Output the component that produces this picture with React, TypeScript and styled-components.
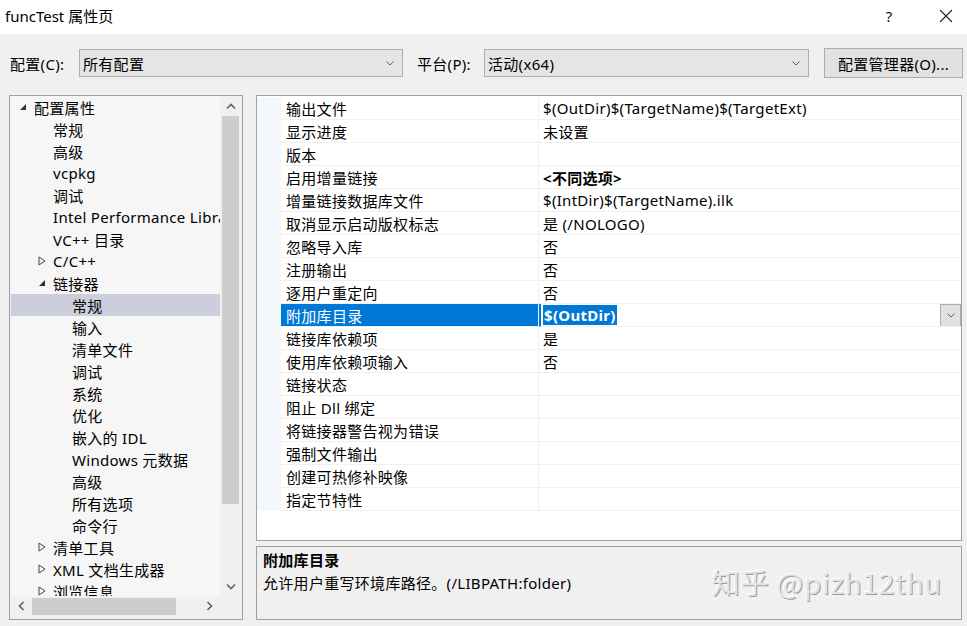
import React from "react";
import styled, { createGlobalStyle } from "styled-components";

const Global = createGlobalStyle`
  html, body { margin: 0; padding: 0; background: #f0f0f0; }
  body { font-family: "Noto Sans", "Noto Sans CJK SC", sans-serif; font-size: 15px; letter-spacing: 0.3px; color: #000; }
  * { box-sizing: border-box; }
`;

const Window = styled.div`
  width: 967px;
  height: 626px;
  display: flex;
  flex-direction: column;
  overflow: hidden;
  background: #f0f0f0;
`;

const TitleBar = styled.div`
  height: 34px;
  flex-shrink: 0;
  background: #fff;
  display: flex;
  align-items: center;
  padding: 0 1px 3px 5px;
  font-size: 15px;
  letter-spacing: 0;
`;

const Title = styled.div`
  flex: 1;
`;

const TitleButton = styled.div<{ $ml?: number }>`
  width: 40px;
  margin-left: ${(p) => p.$ml ?? 0}px;
  display: flex;
  justify-content: center;
  align-items: center;
  font-size: 15px;
  color: #111;
`;

const Body = styled.div`
  flex: 1;
  min-height: 0;
  display: flex;
  flex-direction: column;
  padding: 15px 5px 6px 9px;
`;

const Toolbar = styled.div`
  display: flex;
  align-items: center;
  height: 28px;
  flex-shrink: 0;
`;

const Label = styled.div<{ $w: number; $ml?: number }>`
  width: ${(p) => p.$w}px;
  margin-left: ${(p) => p.$ml ?? 0}px;
  flex-shrink: 0;
  padding-left: 1px;
`;

const Select = styled.div<{ $w: number }>`
  width: ${(p) => p.$w}px;
  height: 28px;
  flex-shrink: 0;
  background: #e5e5e5;
  border: 1px solid #adadad;
  display: flex;
  align-items: center;
  padding: 0 8px 0 3px;
`;

const SelectText = styled.div`
  flex: 1;
`;

const Button = styled.div`
  margin-left: 15px;
  width: 139px;
  height: 30px;
  flex-shrink: 0;
  background: #e1e1e1;
  border: 1px solid #adadad;
  display: flex;
  align-items: center;
  justify-content: center;
`;

const Main = styled.div`
  flex: 1;
  min-height: 0;
  display: flex;
  margin-top: 18px;
  gap: 13px;
`;

const TreePanel = styled.div`
  width: 234px;
  flex-shrink: 0;
  border: 1px solid #a0a0a0;
  display: grid;
  grid-template-columns: minmax(0, 1fr) 21px;
  grid-template-rows: minmax(0, 1fr) 21px;
  background: #f0f0f0;
  padding: 0 1px 2px 1px;
`;

const TreeContent = styled.div`
  background: #f6f6f6;
  overflow: hidden;
  display: flex;
  flex-direction: column;
  min-height: 0;
`;

const TreeRow = styled.div<{ $level: number; $sel?: boolean }>`
  height: 22px;
  flex-shrink: 0;
  display: flex;
  align-items: center;
  white-space: nowrap;
  padding-left: ${(p) => 8 + p.$level * 19}px;
  background: ${(p) => (p.$sel ? "#cccedb" : "transparent")};
`;

const Toggle = styled.div`
  width: 15px;
  flex-shrink: 0;
  display: flex;
  align-items: center;
  justify-content: flex-start;
`;

const VScroll = styled.div`
  display: flex;
  flex-direction: column;
  background: #f0f0f0;
  min-height: 0;
`;

const ArrowBox = styled.div`
  width: 21px;
  height: 20px;
  display: flex;
  align-items: center;
  justify-content: center;
  flex-shrink: 0;
`;

const VTrack = styled.div`
  flex: 1;
  display: flex;
  flex-direction: column;
  padding: 0 2px;
`;

const VThumb = styled.div`
  height: 388px;
  background: #cdcdcd;
`;

const HScroll = styled.div`
  display: flex;
  background: #f0f0f0;
  align-items: stretch;
`;

const HTrack = styled.div`
  flex: 1;
  display: flex;
  padding: 2px 0;
`;

const HThumb = styled.div`
  width: 144px;
  background: #cdcdcd;
`;

const Corner = styled.div`
  background: #f0f0f0;
`;

const RightCol = styled.div`
  flex: 1;
  display: flex;
  flex-direction: column;
  gap: 5px;
`;

const Grid = styled.div`
  height: 446px;
  flex-shrink: 0;
  border: 1px solid #a0a0a0;
  background: #fff;
  padding-top: 1px;
  display: flex;
  flex-direction: column;
`;

const GridRow = styled.div`
  height: 23px;
  display: grid;
  grid-template-columns: 24px 258px minmax(0, 1fr);
  flex-shrink: 0;
`;

const Gutter = styled.div`
  background: #f4f7fc;
`;

const NameCell = styled.div<{ $sel?: boolean }>`
  display: flex;
  align-items: center;
  padding-left: 5px;
  border-bottom: 1px solid #f0f0f0;
  border-right: 1px solid #f0f0f0;
  background: ${(p) => (p.$sel ? "#0078d7" : "#fff")};
  color: ${(p) => (p.$sel ? "#fff" : "#000")};
  white-space: nowrap;
`;

const ValueCell = styled.div<{ $sel?: boolean; $bold?: boolean }>`
  display: flex;
  align-items: center;
  padding-left: ${(p) => (p.$sel ? 2 : 4)}px;
  border-bottom: 1px solid #f0f0f0;
  border-left: ${(p) => (p.$sel ? "2px solid #0078d7" : "none")};
  font-weight: ${(p) => (p.$bold ? 700 : 400)};
  white-space: nowrap;
  overflow: hidden;
`;

const Highlight = styled.span`
  background: #0078d7;
  color: #fff;
  font-weight: 700;
  padding: 0 1px;
  line-height: 20px;
`;

const Spacer = styled.div`
  flex: 1;
`;

const DropButton = styled.div`
  width: 21px;
  height: 23px;
  background: #e1e1e1;
  border: 1px solid #adadad;
  display: flex;
  align-items: center;
  justify-content: center;
`;

const Desc = styled.div`
  flex: 1;
  border: 1px solid #a0a0a0;
  background: #f0f0f0;
  padding: 2px 6px;
  position: relative;
`;

const DescTitle = styled.div`
  font-weight: 700;
  line-height: 22px;
`;

const DescText = styled.div`
  line-height: 24px;
`;

const Watermark = styled.div`
  position: absolute;
  right: 19px;
  top: 15px;
  font-family: "Noto Sans CJK SC", "Noto Sans", sans-serif;
  font-size: 28px;
  letter-spacing: 0.8px;
  color: #e4e4e4;
  text-shadow: 1px 1px 0 #9c9c9c, -1px -1px 0 #ffffff;
`;

const Chevron = ({ size = 8, color = "#606060" }: { size?: number; color?: string }) => (
  <svg width={size} height={size / 2 + 1} viewBox="0 0 8 5">
    <path d="M0.5 0.5 L4 4 L7.5 0.5" fill="none" stroke={color} strokeWidth="1" />
  </svg>
);

const ExpandedTri = () => (
  <svg width="8" height="8" viewBox="0 0 8 8">
    <path d="M7 1 L7 7 L1 7 Z" fill="#333" />
  </svg>
);

const CollapsedTri = () => (
  <svg width="8" height="10" viewBox="0 0 8 10">
    <path d="M1 1 L7 5 L1 9 Z" fill="none" stroke="#444" strokeWidth="1" />
  </svg>
);

const ScrollArrow = ({ dir }: { dir: "up" | "down" | "left" | "right" }) => {
  const d = {
    up: "M1 5.5 L5 1.5 L9 5.5",
    down: "M1 1.5 L5 5.5 L9 1.5",
    left: "M5.5 1 L1.5 5 L5.5 9",
    right: "M1.5 1 L5.5 5 L1.5 9",
  }[dir];
  const vert = dir === "up" || dir === "down";
  return (
    <svg width={vert ? 10 : 7} height={vert ? 7 : 10} viewBox={vert ? "0 0 10 7" : "0 0 7 10"}>
      <path d={d} fill="none" stroke="#606060" strokeWidth="1.6" />
    </svg>
  );
};

type TreeItem = { text: string; level: number; toggle?: "open" | "closed"; sel?: boolean };

const treeItems: TreeItem[] = [
  { text: "配置属性", level: 0, toggle: "open" },
  { text: "常规", level: 1 },
  { text: "高级", level: 1 },
  { text: "vcpkg", level: 1 },
  { text: "调试", level: 1 },
  { text: "Intel Performance Libraries", level: 1 },
  { text: "VC++ 目录", level: 1 },
  { text: "C/C++", level: 1, toggle: "closed" },
  { text: "链接器", level: 1, toggle: "open" },
  { text: "常规", level: 2, sel: true },
  { text: "输入", level: 2 },
  { text: "清单文件", level: 2 },
  { text: "调试", level: 2 },
  { text: "系统", level: 2 },
  { text: "优化", level: 2 },
  { text: "嵌入的 IDL", level: 2 },
  { text: "Windows 元数据", level: 2 },
  { text: "高级", level: 2 },
  { text: "所有选项", level: 2 },
  { text: "命令行", level: 2 },
  { text: "清单工具", level: 1, toggle: "closed" },
  { text: "XML 文档生成器", level: 1, toggle: "closed" },
  { text: "浏览信息", level: 1, toggle: "closed" },
];

type Prop = { name: string; value: string; bold?: boolean; sel?: boolean };

const props: Prop[] = [
  { name: "输出文件", value: "$(OutDir)$(TargetName)$(TargetExt)" },
  { name: "显示进度", value: "未设置" },
  { name: "版本", value: "" },
  { name: "启用增量链接", value: "<不同选项>", bold: true },
  { name: "增量链接数据库文件", value: "$(IntDir)$(TargetName).ilk" },
  { name: "取消显示启动版权标志", value: "是 (/NOLOGO)" },
  { name: "忽略导入库", value: "否" },
  { name: "注册输出", value: "否" },
  { name: "逐用户重定向", value: "否" },
  { name: "附加库目录", value: "$(OutDir)", sel: true },
  { name: "链接库依赖项", value: "是" },
  { name: "使用库依赖项输入", value: "否" },
  { name: "链接状态", value: "" },
  { name: "阻止 Dll 绑定", value: "" },
  { name: "将链接器警告视为错误", value: "" },
  { name: "强制文件输出", value: "" },
  { name: "创建可热修补映像", value: "" },
  { name: "指定节特性", value: "" },
];

export default function App() {
  return (
    <Window>
      <Global />
      <TitleBar>
        <Title>funcTest 属性页</Title>
        <TitleButton>?</TitleButton>
        <TitleButton $ml={17}>
          <svg width="14" height="14" viewBox="0 0 14 14">
            <path d="M1 1 L13 13 M13 1 L1 13" stroke="#222" strokeWidth="1.1" />
          </svg>
        </TitleButton>
      </TitleBar>
      <Body>
        <Toolbar>
          <Label $w={70}>配置(C):</Label>
          <Select $w={324}>
            <SelectText>所有配置</SelectText>
            <Chevron />
          </Select>
          <Label $w={68} $ml={13}>平台(P):</Label>
          <Select $w={325}>
            <SelectText>活动(x64)</SelectText>
            <Chevron />
          </Select>
          <Button>配置管理器(O)...</Button>
        </Toolbar>
        <Main>
          <TreePanel>
            <TreeContent>
              {treeItems.map((it, i) => (
                <TreeRow key={i} $level={it.level} $sel={it.sel}>
                  <Toggle>
                    {it.toggle === "open" && <ExpandedTri />}
                    {it.toggle === "closed" && <CollapsedTri />}
                  </Toggle>
                  {it.text}
                </TreeRow>
              ))}
            </TreeContent>
            <VScroll>
              <ArrowBox>
                <ScrollArrow dir="up" />
              </ArrowBox>
              <VTrack>
                <VThumb />
              </VTrack>
              <ArrowBox>
                <ScrollArrow dir="down" />
              </ArrowBox>
            </VScroll>
            <HScroll>
              <ArrowBox>
                <ScrollArrow dir="left" />
              </ArrowBox>
              <HTrack>
                <HThumb />
              </HTrack>
              <ArrowBox>
                <ScrollArrow dir="right" />
              </ArrowBox>
            </HScroll>
            <Corner />
          </TreePanel>
          <RightCol>
            <Grid>
              {props.map((p, i) => (
                <GridRow key={i}>
                  <Gutter />
                  <NameCell $sel={p.sel}>{p.name}</NameCell>
                  {p.sel ? (
                    <ValueCell $sel>
                      <Highlight>{p.value}</Highlight>
                      <Spacer />
                      <DropButton>
                        <Chevron />
                      </DropButton>
                    </ValueCell>
                  ) : (
                    <ValueCell $bold={p.bold}>{p.value}</ValueCell>
                  )}
                </GridRow>
              ))}
            </Grid>
            <Desc>
              <DescTitle>附加库目录</DescTitle>
              <DescText>允许用户重写环境库路径。(/LIBPATH:folder)</DescText>
              <Watermark>知乎 @pizh12thu</Watermark>
            </Desc>
          </RightCol>
        </Main>
      </Body>
    </Window>
  );
}
